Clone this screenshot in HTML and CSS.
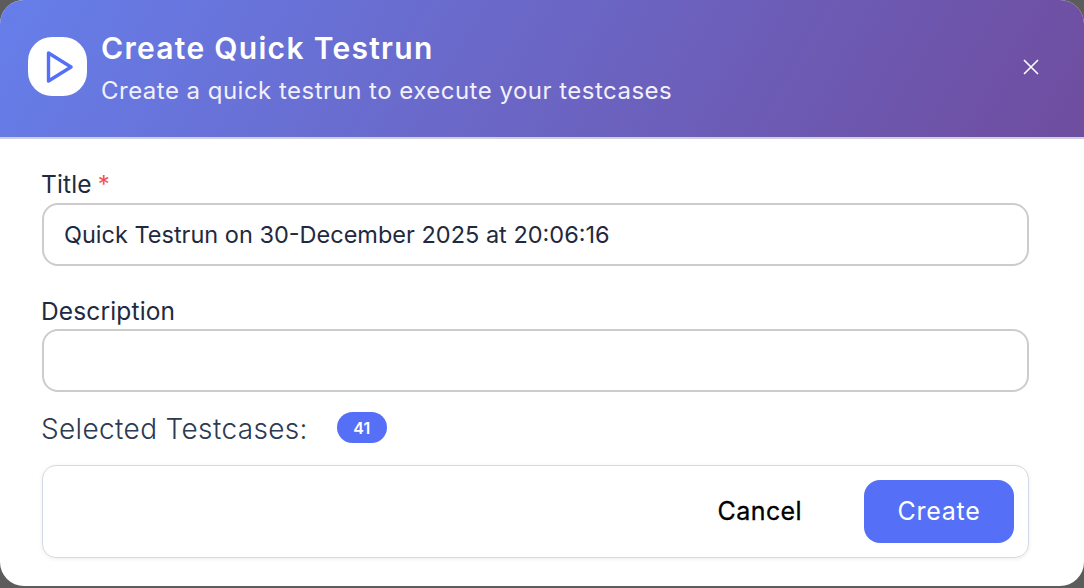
FILE: index.html
```html
<!DOCTYPE html>
<html lang="en">
<head>
    <meta charset="UTF-8">
    <meta name="viewport" content="width=device-width, initial-scale=1.0">
    <title>Create Quick Testrun</title>
    <link rel="stylesheet" href="styles.css">
</head>
<body>
    <div class="modal">
        <div class="modal-header">
            <div class="header-icon">
                <svg width="28" height="32" viewBox="0 0 28 32" fill="none">
                    <path d="M3.5 2 L26 16 L3.5 30 Z" stroke="#5570f6" stroke-width="3.4" stroke-linejoin="round"/>
                </svg>
            </div>
            <div class="header-text">
                <h1>Create Quick Testrun</h1>
                <p>Create a quick testrun to execute your testcases</p>
            </div>
            <button class="close-btn">
                <svg width="16" height="16" viewBox="0 0 16 16" fill="none">
                    <path d="M1 1 L15 15 M15 1 L1 15" stroke="#fff" stroke-width="1.6"/>
                </svg>
            </button>
        </div>
        <div class="modal-body">
            <div class="field">
                <label class="field-label">Title<span class="required">*</span></label>
                <input class="field-input" type="text" value="Quick Testrun on 30-December 2025 at 20:06:16">
            </div>
            <div class="field">
                <label class="field-label">Description</label>
                <input class="field-input" type="text">
            </div>
            <div class="selected">
                <span class="selected-label">Selected Testcases:</span>
                <span class="badge">41</span>
            </div>
            <div class="footer">
                <button class="cancel-btn">Cancel</button>
                <button class="create-btn">Create</button>
            </div>
        </div>
    </div>
</body>
</html>
```

FILE: styles.css
```css
*{
    margin: 0;
    padding: 0;
    box-sizing: border-box;
}
html, body{
    height: 588px;
    overflow: hidden;
}
body{
    background-color: #5c5c5c;
    font-family: Inter, "Liberation Sans", sans-serif;
}
.modal{
    width: 1084px;
    height: 586px;
    background-color: #fff;
    border-radius: 24px;
    overflow: hidden;
}
.modal-header{
    height: 139px;
    display: flex;
    align-items: flex-start;
    padding: 28px 44px 0 28px;
    background: linear-gradient(120deg, #667eea 0%, #6f4d9f 100%);
    border-bottom: 2px solid #cfd0da;
}
.header-icon{
    width: 59px;
    height: 59px;
    margin-top: 9px;
    background-color: #fff;
    border-radius: 24px;
    display: flex;
    align-items: center;
    justify-content: center;
}
.header-icon svg{
    margin-left: 3px;
}
.header-text{
    flex: 1;
    margin-left: 14px;
    color: #fff;
}
.header-text h1{
    font-size: 30px;
    line-height: 40px;
    font-weight: 600;
    letter-spacing: 1.3px;
}
.header-text p{
    font-size: 24px;
    line-height: 30px;
    margin-top: 8px;
    letter-spacing: 0.48px;
    color: #f2f0fa;
}
.close-btn{
    width: 18px;
    height: 18px;
    margin-top: 30px;
    background: none;
    border: none;
    display: flex;
    align-items: center;
    justify-content: center;
}
.modal-body{
    padding: 30px 55px 0 42px;
}
.field{
    margin-bottom: 30px;
}
.field-label{
    display: block;
    font-size: 24.5px;
    line-height: 30px;
    letter-spacing: 0.15px;
    color: #1f2a40;
    margin-bottom: 3px;
    margin-left: -1px;
}
.required{
    margin-left: 6px;
    font-size: 24px;
    color: #ef5350;
}
.field-input{
    display: block;
    width: 100%;
    height: 63px;
    padding: 0 20px;
    font-family: inherit;
    font-size: 23.5px;
    color: #1f2a40;
    background-color: #fff;
    border: 2px solid #cccccc;
    border-radius: 16px;
    outline: none;
}
.selected{
    display: flex;
    align-items: center;
    margin-top: -11px;
    height: 36px;
}
.selected-label{
    margin-left: -1px;
    font-size: 28px;
    letter-spacing: 0.35px;
    font-weight: 300;
    color: #2c3a52;
}
.badge{
    width: 50px;
    height: 31px;
    margin-left: 29px;
    margin-bottom: 3px;
    background-color: #5570f6;
    color: #fff;
    border-radius: 16px;
    font-size: 16px;
    font-weight: 600;
    display: flex;
    align-items: center;
    justify-content: center;
}
.footer{
    height: 93px;
    margin-top: 18px;
    padding-right: 14px;
    display: flex;
    align-items: center;
    justify-content: flex-end;
    background-color: #fff;
    border: 1px solid #d3dae5;
    border-radius: 14px;
    box-shadow: 0 1px 4px rgba(40, 50, 70, 0.08);
}
.cancel-btn{
    font-family: inherit;
    font-size: 25px;
    font-weight: 400;
    letter-spacing: 0.4px;
    -webkit-text-stroke: 0.3px #000;
    color: #000;
    background: none;
    border: none;
    margin-right: 62px;
    padding-bottom: 2px;
}
.create-btn{
    width: 150px;
    height: 63px;
    padding-bottom: 2px;
    font-family: inherit;
    font-size: 25px;
    letter-spacing: 0.7px;
    color: #fff;
    background-color: #5570f6;
    border: none;
    border-radius: 16px;
}
```
